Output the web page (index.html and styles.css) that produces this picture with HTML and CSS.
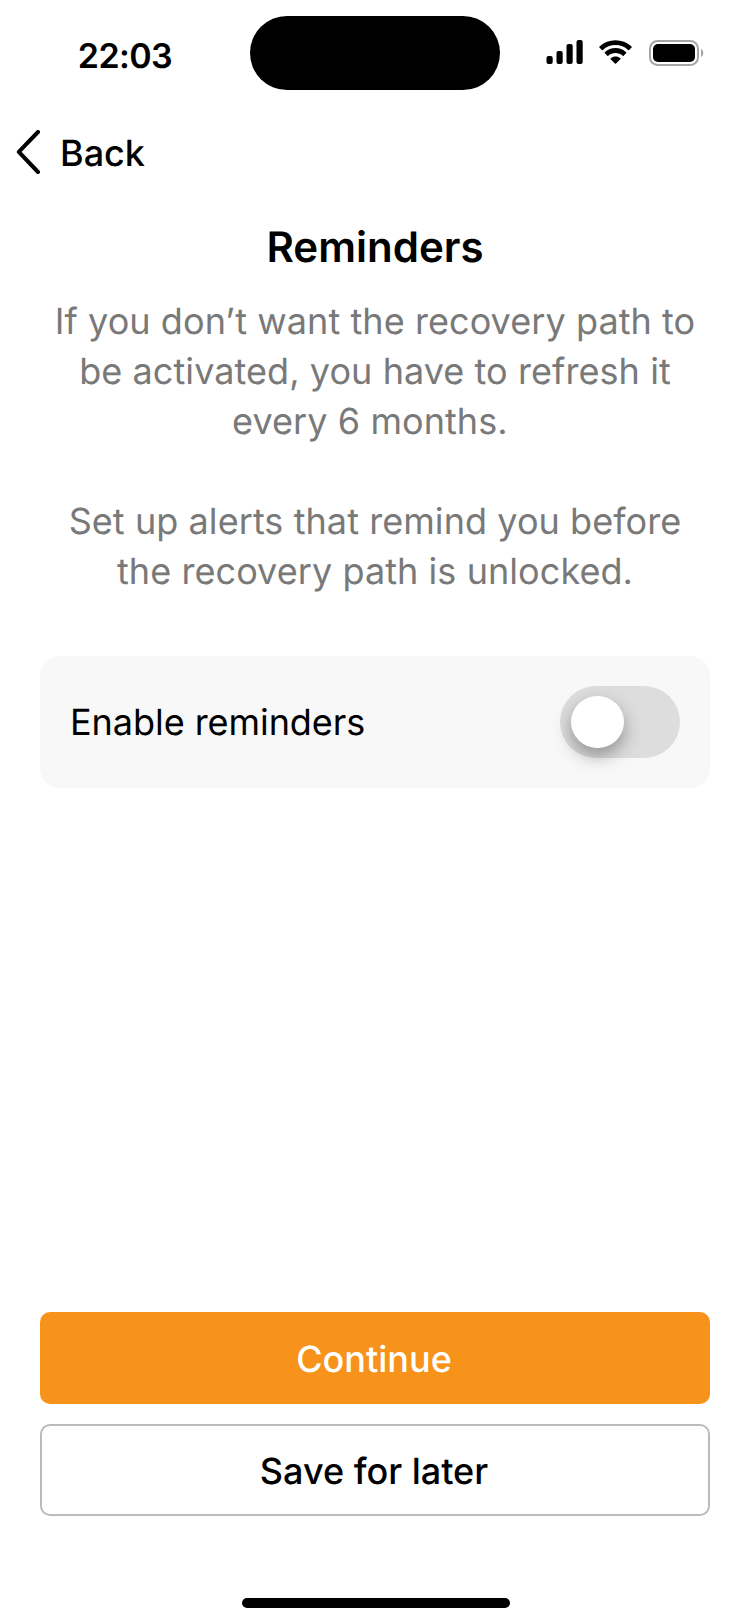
FILE: index.html
```html
<!DOCTYPE html>
<html lang="en">
<head>
<meta charset="utf-8">
<title>Reminders</title>
<link rel="stylesheet" href="styles.css">
</head>
<body>
<div class="screen">
  <header class="status">
    <div class="time">22:03</div>
    <div class="island"></div>
    <div class="indicators">
      <svg class="signal" width="37" height="24" viewBox="0 0 37 24"><rect x="0.500" y="16" width="6.200" height="8" rx="2"/><rect x="10.500" y="11" width="6.200" height="13" rx="2"/><rect x="20.500" y="4" width="6.200" height="20" rx="2"/><rect x="30.500" y="0" width="6.200" height="24" rx="2"/></svg>
      <svg class="wifi" width="35" height="24" viewBox="0 0 34 24" preserveAspectRatio="none"><path d="M17 5c4.700 0 9 1.800 12.300 5 .3.300.6.300.9 0l2.400-2.400c.3-.3.300-.8 0-1.100C24-1.800 10-1.800 1.400 6.500c-.3.300-.3.800 0 1.100L3.800 10c.3.300.6.300.9 0C8 6.800 12.300 5 17 5Z"/><path d="M17 13c2.600 0 5.100 1 7 2.700.3.300.6.300.9 0l2.400-2.400c.3-.3.300-.8 0-1.100-5.800-5.500-14.800-5.500-20.600 0-.3.300-.3.800 0 1.100l2.400 2.400c.3.300.6.300.9 0C11.900 14 14.400 13 17 13Z"/><path d="M21.700 19.300c.3-.3.300-.8 0-1.100-2.700-2.300-6.700-2.300-9.400 0-.3.300-.3.800 0 1.100l4.200 4.200c.3.300.7.300 1 0Z"/></svg>
      <svg class="battery" width="55" height="26" viewBox="0 0 55 26"><rect x="1" y="1" width="48" height="24" rx="7.500" fill="none" stroke="#a6a6a6" stroke-width="2"/><path d="M52 9v8c3-1.300 3-6.700 0-8Z" fill="#a6a6a6"/><rect x="4" y="4" width="42" height="18" rx="5"/></svg>
    </div>
  </header>
  <nav class="nav">
    <svg width="24" height="44" viewBox="0 0 24 44"><path d="M22 2 2.800 21.800 22 42" fill="none" stroke="#000" stroke-width="4" stroke-linecap="round" stroke-linejoin="round"/></svg>
    <span>Back</span>
  </nav>
  <main class="content">
    <h1>Reminders</h1>
    <p>If you don’t want the recovery path to<br>be activated, you have to refresh it<br>every 6 months.&nbsp;</p>
    <p class="second">Set up alerts that remind you before<br>the recovery path is unlocked.</p>
    <div class="card"><span>Enable reminders</span><div class="toggle"><div class="knob"></div></div></div>
  </main>
  <footer class="actions">
    <div class="button primary">Continue</div>
    <div class="button secondary">Save for later</div>
  </footer>
  <div class="home"></div>
</div>
</body>
</html>
```
FILE: styles.css
```css
body { margin: 0; }
.screen { box-sizing: border-box; width: 750px; height: 1624px; display: flex; flex-direction: column; background: #fff; color: #000; font-family: Inter, "Liberation Sans", sans-serif; text-rendering: geometricPrecision; }
.status { display: grid; grid-template-columns: 250px 250px 250px; height: 112px; padding-top: 16px; box-sizing: border-box; }
.time { text-align: center; font-weight: 600; font-size: 34px; line-height: 82px; letter-spacing: -0.6px; }
.island { height: 74px; border-radius: 37px; background: #000; }
.indicators { display: flex; align-items: flex-start; gap: 15px; padding: 24px 0 0 46px; }
.battery { margin-left: 1px; }
.nav { display: flex; align-items: center; gap: 20px; height: 80px; padding-left: 16px; font-size: 36px; font-weight: 500; }
.nav span { padding-top: 2px; }
.content { padding: 29px 40px 0; text-align: center; }
h1 { margin: 0; font-size: 42px; line-height: 54px; font-weight: 600; }
p { margin: 21px 0 0; color: #797979; font-size: 36px; line-height: 50px; letter-spacing: 0.07px; }
.second { margin-top: 50px; }
.card { display: flex; align-items: center; justify-content: space-between; box-sizing: border-box; height: 132px; margin-top: 60px; padding: 0 30px; border-radius: 20px; background: #f8f8f8; font-size: 36px; letter-spacing: -0.05px; }
.toggle { display: flex; align-items: center; box-sizing: border-box; width: 120px; height: 72px; padding-left: 10.5px; border-radius: 36px; background: #ddd; }
.knob { width: 53.5px; height: 52px; border-radius: 50%; background: #fff; box-shadow: 0 8px 18px rgba(0,0,0,.34); }
.actions { display: flex; flex-direction: column; gap: 20px; margin-top: auto; padding: 0 40px; }
.button { display: flex; align-items: center; justify-content: center; box-sizing: border-box; height: 92px; padding: 2px 2px 0 0; border-radius: 10px; font-size: 36px; font-weight: 500; }
.primary { background: #f7931a; color: #fff; }
.secondary { border: 2px solid #bbb; }
.home { flex: none; width: 268px; height: 10px; margin: 82px auto 16px 242px; border-radius: 5px; background: #000; }
```
